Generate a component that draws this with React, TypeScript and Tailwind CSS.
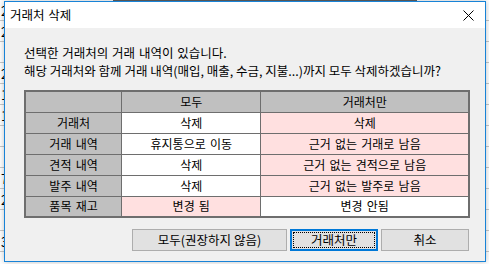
import React from 'react';

const font = { fontFamily: '"Noto Sans CJK KR", "Noto Sans", sans-serif' };

interface Row {
  label: string;
  all: string;
  only: string;
  allPink?: boolean;
  onlyPink?: boolean;
}

const rows: Row[] = [
  { label: '거래처', all: '삭제', only: '삭제', onlyPink: true },
  { label: '거래 내역', all: '휴지통으로 이동', only: '근거 없는 거래로 남음', onlyPink: true },
  { label: '견적 내역', all: '삭제', only: '근거 없는 견적으로 남음', onlyPink: true },
  { label: '발주 내역', all: '삭제', only: '근거 없는 발주로 남음', onlyPink: true },
  { label: '품목 재고', all: '변경 됨', only: '변경 안됨', allPink: true },
];

// sheet rows peeking out behind the dialog
const sheetRows = ['2', '2', '', '2', '1', '1', '', '', '7', '2', '', '3'];

const App: React.FC = () => {
  return (
    <div className="relative w-[489px] h-[264px] overflow-hidden bg-white text-black" style={font}>
      <div className="flex flex-col">
        {sheetRows.map((d, i) => (
          <div key={i} className="h-[21px] border-b border-[#c8c8c8] flex items-center text-[13px] leading-none">
            <span className="pl-px">{d}</span>
          </div>
        ))}
      </div>
      <div className="absolute top-0 left-[113px] w-[304px] h-px bg-[#606060]" />

      <div className="absolute left-[4px] top-[1px] w-[482px] h-[261px] border border-[#1883d7] bg-[#f0f0f0] flex flex-col shadow-[0_0_6px_rgba(0,0,0,0.25)]">
        <div className="h-[26px] bg-white flex items-center justify-between pl-[5px] pr-[10px]">
          <span className="text-[12.5px] leading-none [word-spacing:1px]">거래처 삭제</span>
          <svg width="11" height="11" viewBox="0 0 11 11" className="mr-[1px]">
            <path d="M0.5 0.5 L10.5 10.5 M10.5 0.5 L0.5 10.5" stroke="#000" strokeWidth="1" fill="none" />
          </svg>
        </div>

        <div className="flex flex-col pl-[19px] pr-[15px] pt-[16px]">
          <p className="text-[12.5px] leading-[18px] [word-spacing:1px]">선택한 거래처의 거래 내역이 있습니다.</p>
          <p className="text-[12.5px] leading-[18px] whitespace-nowrap">
            해당 거래처와 함께 거래 내역(매입, 매출, 수금, 지불...)까지 모두 삭제하겠습니까?
          </p>

          <table className="mt-[10px] w-[446px] border-collapse border-2 border-[#6e6e6e] text-[12px] leading-none [word-spacing:1.5px]">
            <colgroup>
              <col className="w-[97px]" />
              <col className="w-[140px]" />
              <col className="w-[209px]" />
            </colgroup>
            <thead>
              <tr className="h-[21px] bg-[#c0c0c0]">
                <th className="border border-[#6e6e6e] font-normal" />
                <th className="border border-[#6e6e6e] font-normal">모두</th>
                <th className="border border-[#6e6e6e] font-normal">거래처만</th>
              </tr>
            </thead>
            <tbody>
              {rows.map((r) => (
                <tr key={r.label} className="h-[21px]">
                  <td className="border border-[#6e6e6e] bg-[#c0c0c0] text-center">{r.label}</td>
                  <td className={`border border-[#6e6e6e] text-center ${r.allPink ? 'bg-[#ffe0e0]' : 'bg-white'}`}>{r.all}</td>
                  <td className={`border border-[#6e6e6e] text-center ${r.onlyPink ? 'bg-[#ffe0e0]' : 'bg-white'}`}>{r.only}</td>
                </tr>
              ))}
            </tbody>
          </table>

          <div className="mt-[11px] flex justify-end gap-[3px] pr-[1px] text-[12.5px] leading-none [word-spacing:1px]">
            <button className="w-[155px] h-[22px] bg-[#e1e1e1] border border-[#adadad]">모두(권장하지 않음)</button>
            <button className="w-[88px] h-[22px] bg-[#e1e1e1] border-2 border-[#0078d7] p-[1px]">
              <span className="flex h-full w-full items-center justify-center border border-dotted border-black">거래처만</span>
            </button>
            <button className="w-[88px] h-[22px] bg-[#e1e1e1] border border-[#adadad]">취소</button>
          </div>
        </div>
      </div>
    </div>
  );
};

export default App;
